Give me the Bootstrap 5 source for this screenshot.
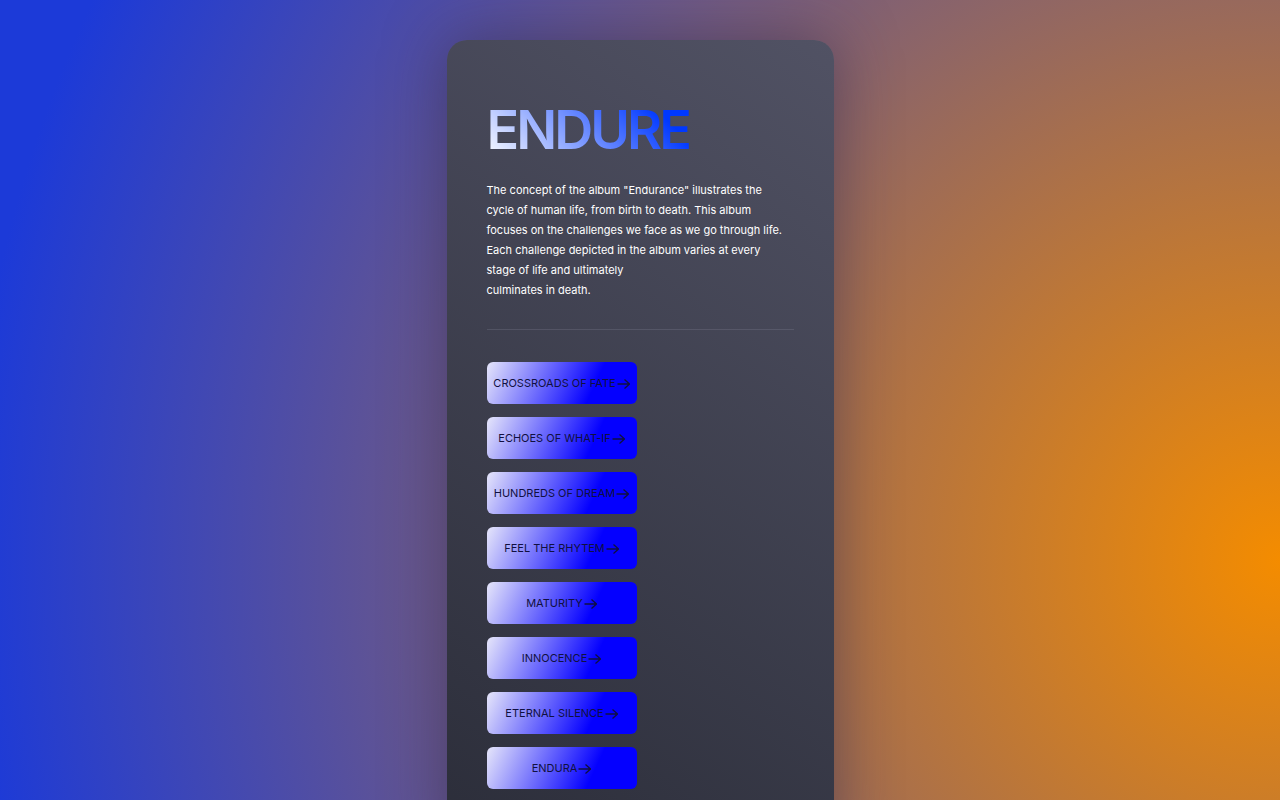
<!DOCTYPE html>
<html lang="en">
<head>
<meta charset="utf-8">
<meta name="viewport" content="width=device-width, initial-scale=1">
<title>Endure</title>
<link href="https://cdn.jsdelivr.net/npm/bootstrap@5.3.0/dist/css/bootstrap.min.css" rel="stylesheet">
<style>
  body {
    font-family: Inter, "Liberation Sans", sans-serif;
    background: radial-gradient(circle farthest-corner at 100% 70%, #f48c00, #1c3ad8 94%) fixed;
  }
  .album-page { padding: 40px 12px; }
  .album-panel {
    max-width: 387px;
    padding: 60px 40px;
    border-radius: 20px;
    color: #fff;
    background: linear-gradient(35deg, #2b2d39, #515264);
    box-shadow: 0 0 60px rgba(40, 35, 70, .5);
  }
  .album-title {
    margin-bottom: 20px;
    font-size: 54px;
    font-weight: 600;
    line-height: 60px;
    letter-spacing: -3px;
    color: transparent;
    background: linear-gradient(45deg, #fff, #0038ff 84%);
    -webkit-background-clip: text;
    background-clip: text;
  }
  .album-text {
    max-width: 300px;
    margin-bottom: 29px;
    font-size: 11px;
    line-height: 20px;
  }
  .album-rule { margin: 0 0 32px; border-color: #8a8ca0; }
  .track-list { gap: 13px; }
  .track-btn {
    width: 150px;
    height: 42px;
    border-radius: 6px;
    font-size: 11px;
    color: #101040;
    background: linear-gradient(115deg, #e6e6fa, #0400ff 70%);
  }
  .track-btn:hover, .track-btn:active { background: #0400ff; color: #fff; }
  .track-btn svg {
    width: 14px;
    height: 14px;
    fill: none;
    stroke: currentColor;
    stroke-width: 1.3;
  }
</style>
</head>
<body>
<svg class="d-none" aria-hidden="true">
  <symbol id="arrow" viewBox="0 0 14 14"><path d="M1.5 8H13.5M8.5 3.5L13.5 8L8.5 12.5"/></symbol>
</svg>
<main class="album-page d-flex justify-content-center">
  <article class="album-panel w-100">
    <h1 class="album-title d-table">ENDURE</h1>
    <p class="album-text">The concept of the album "Endurance" illustrates the cycle of human life, from birth to death. This album focuses on the challenges we face as we go through life. Each challenge depicted in the album varies at every stage of life and ultimately<br>culminates in death.</p>
    <hr class="album-rule">
    <nav class="track-list d-flex flex-column align-items-start" aria-label="Tracks">
      <button type="button" class="track-btn btn border-0 p-0 d-flex align-items-center justify-content-center">CROSSROADS OF FATE<svg aria-hidden="true"><use href="#arrow"/></svg></button>
      <button type="button" class="track-btn btn border-0 p-0 d-flex align-items-center justify-content-center">ECHOES OF WHAT-IF<svg aria-hidden="true"><use href="#arrow"/></svg></button>
      <button type="button" class="track-btn btn border-0 p-0 d-flex align-items-center justify-content-center">HUNDREDS OF DREAM<svg aria-hidden="true"><use href="#arrow"/></svg></button>
      <button type="button" class="track-btn btn border-0 p-0 d-flex align-items-center justify-content-center">FEEL THE RHYTEM<svg aria-hidden="true"><use href="#arrow"/></svg></button>
      <button type="button" class="track-btn btn border-0 p-0 d-flex align-items-center justify-content-center">MATURITY<svg aria-hidden="true"><use href="#arrow"/></svg></button>
      <button type="button" class="track-btn btn border-0 p-0 d-flex align-items-center justify-content-center">INNOCENCE<svg aria-hidden="true"><use href="#arrow"/></svg></button>
      <button type="button" class="track-btn btn border-0 p-0 d-flex align-items-center justify-content-center">ETERNAL SILENCE<svg aria-hidden="true"><use href="#arrow"/></svg></button>
      <button type="button" class="track-btn btn border-0 p-0 d-flex align-items-center justify-content-center">ENDURA<svg aria-hidden="true"><use href="#arrow"/></svg></button>
    </nav>
  </article>
</main>
<script src="https://cdn.jsdelivr.net/npm/bootstrap@5.3.0/dist/js/bootstrap.bundle.min.js"></script>
</body>
</html>
